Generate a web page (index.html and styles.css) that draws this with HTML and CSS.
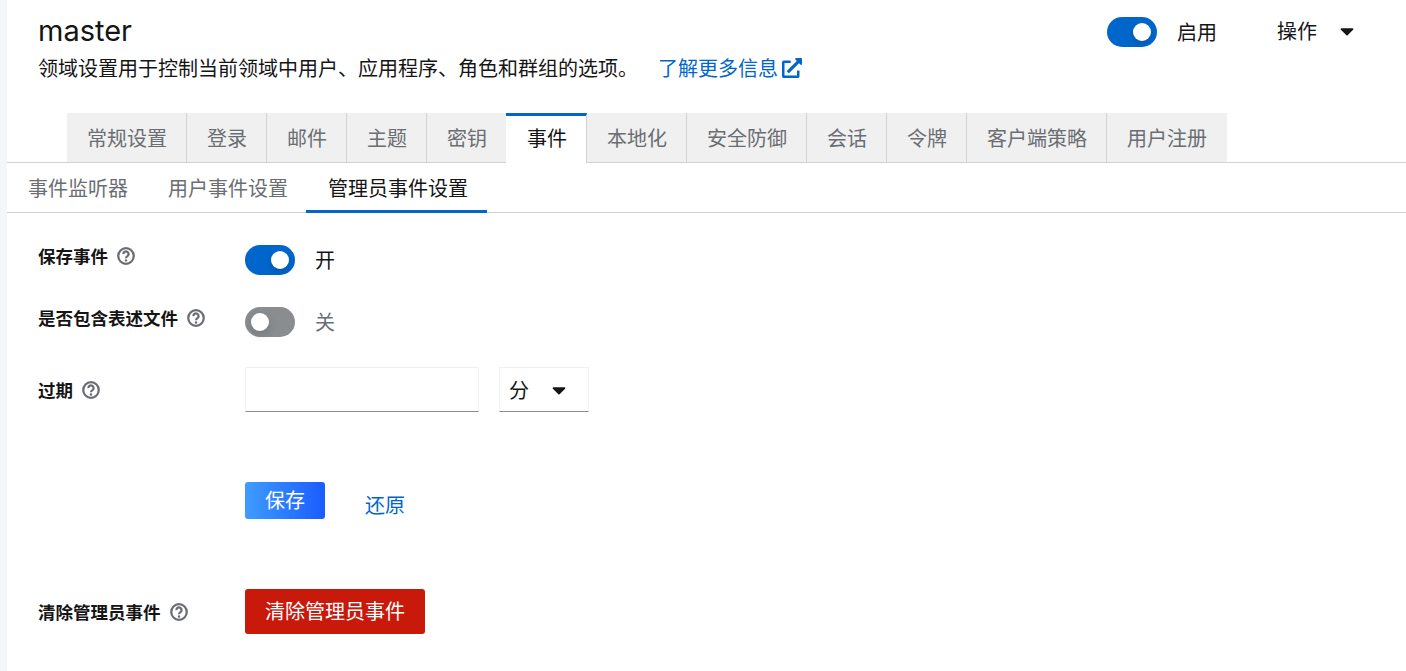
FILE: index.html
```html
<!DOCTYPE html>
<html lang="zh-CN">
<head>
<meta charset="utf-8">
<title>master</title>
<link rel="stylesheet" href="styles.css">
</head>
<body>
<main class="page">
  <header class="head">
    <div class="head-text">
      <h1 class="title">master</h1>
      <p class="desc"><span>领域设置用于控制当前领域中用户、应用程序、角色和群组的选项。</span>
        <a class="more" href="#">了解更多信息<svg class="ext" viewBox="0 0 512 512"><path d="M432,320H400a16,16,0,0,0-16,16V448H64V128H208a16,16,0,0,0,16-16V80a16,16,0,0,0-16-16H48A48,48,0,0,0,0,112V464a48,48,0,0,0,48,48H400a48,48,0,0,0,48-48V336A16,16,0,0,0,432,320ZM488,0h-128c-21.37,0-32.05,25.91-17,41l35.73,35.73L135,320.37a24,24,0,0,0,0,34L157.67,377a24,24,0,0,0,34,0L435.28,133.32,471,169c15,15,41,4.5,41-17V24A24,24,0,0,0,488,0Z"/></svg></a>
      </p>
    </div>
    <div class="head-actions">
      <span class="toggle on"><i class="knob"></i></span>
      <span class="toggle-label">启用</span>
      <span class="actions">操作<svg class="caret" viewBox="0 0 320 512"><path d="M31.3 192h257.3c17.8 0 26.7 21.5 14.1 34.1L174.1 354.8c-7.8 7.8-20.5 7.8-28.3 0L17.2 226.1C4.6 213.5 13.5 192 31.3 192z"/></svg></span>
    </div>
  </header>

  <nav class="tabs">
    <a class="tab">常规设置</a>
    <a class="tab">登录</a>
    <a class="tab">邮件</a>
    <a class="tab">主题</a>
    <a class="tab">密钥</a>
    <a class="tab active">事件</a>
    <a class="tab">本地化</a>
    <a class="tab">安全防御</a>
    <a class="tab">会话</a>
    <a class="tab">令牌</a>
    <a class="tab">客户端策略</a>
    <a class="tab">用户注册</a>
  </nav>

  <nav class="subtabs">
    <a class="subtab">事件监听器</a>
    <a class="subtab">用户事件设置</a>
    <a class="subtab active">管理员事件设置</a>
  </nav>

  <section class="form">
    <div class="row row-save">
      <label class="label">保存事件<svg class="help" viewBox="0 0 16 16"><circle cx="8" cy="8" r="6.9"/><path d="M5.7 6.3a2.3 2.3 0 1 1 3.6 1.8c-.9.6-1.3 1-1.3 1.8"/><circle class="dot" cx="8" cy="11.9" r="1.1"/></svg></label>
      <span class="toggle on"><i class="knob"></i></span>
      <span class="toggle-label">开</span>
    </div>
    <div class="row row-profile">
      <label class="label">是否包含表述文件<svg class="help" viewBox="0 0 16 16"><circle cx="8" cy="8" r="6.9"/><path d="M5.7 6.3a2.3 2.3 0 1 1 3.6 1.8c-.9.6-1.3 1-1.3 1.8"/><circle class="dot" cx="8" cy="11.9" r="1.1"/></svg></label>
      <span class="toggle"><i class="knob"></i></span>
      <span class="toggle-label muted">关</span>
    </div>
    <div class="row row-expire">
      <label class="label">过期<svg class="help" viewBox="0 0 16 16"><circle cx="8" cy="8" r="6.9"/><path d="M5.7 6.3a2.3 2.3 0 1 1 3.6 1.8c-.9.6-1.3 1-1.3 1.8"/><circle class="dot" cx="8" cy="11.9" r="1.1"/></svg></label>
      <input class="input" type="text">
      <span class="select">分<svg class="caret" viewBox="0 0 320 512"><path d="M31.3 192h257.3c17.8 0 26.7 21.5 14.1 34.1L174.1 354.8c-7.8 7.8-20.5 7.8-28.3 0L17.2 226.1C4.6 213.5 13.5 192 31.3 192z"/></svg></span>
    </div>
    <div class="row row-buttons">
      <span class="label"></span>
      <button class="btn primary" type="button">保存</button>
      <a class="link" href="#">还原</a>
    </div>
    <div class="row row-clear">
      <label class="label">清除管理员事件<svg class="help" viewBox="0 0 16 16"><circle cx="8" cy="8" r="6.9"/><path d="M5.7 6.3a2.3 2.3 0 1 1 3.6 1.8c-.9.6-1.3 1-1.3 1.8"/><circle class="dot" cx="8" cy="11.9" r="1.1"/></svg></label>
      <button class="btn danger" type="button">清除管理员事件</button>
    </div>
  </section>
</main>
</body>
</html>
```
FILE: styles.css
```css
* { box-sizing: border-box; }
html, body { margin: 0; padding: 0; height: 100%; }
body {
  background: #f5f6f8;
  color: #151515;
  font-family: "Noto Sans CJK SC", "Liberation Sans", sans-serif;
  font-size: 20px;
  overflow: hidden;
}
.page {
  margin-left: 7px;
  height: 671px;
  background: #fff;
}
.head {
  display: flex;
  justify-content: space-between;
  height: 113px;
  padding: 14px 52px 0 31px;
}
.title {
  margin: 0;
  font-family: "Inter", "Noto Sans", sans-serif;
  font-size: 29px;
  line-height: 34px;
  font-weight: 400;
}
.desc {
  margin: 3px 0 0;
  display: flex;
  align-items: center;
  gap: 20px;
  font-size: 20px;
  line-height: 34px;
  color: #151515;
}
.more { display: flex; align-items: center; color: #06c; text-decoration: none; }
.ext { width: 20px; height: 20px; margin-left: 4px; fill: #06c; }
.head-actions { display: flex; align-items: center; height: 36px; }
.toggle {
  position: relative;
  display: inline-block;
  flex: none;
  width: 50px;
  height: 30px;
  border-radius: 15px;
  background: #8a8d90;
}
.toggle.on { background: #06c; }
.knob {
  position: absolute;
  top: 6px;
  left: 6px;
  width: 18px;
  height: 18px;
  border-radius: 50%;
  background: #fff;
  box-shadow: 0 4px 8px rgba(3, 3, 3, .16);
}
.toggle.on .knob { left: 26px; }
.toggle-label { margin-left: 20px; font-size: 20px; line-height: 30px; color: #151515; }
.toggle-label.muted { color: #6a6e73; }
.actions {
  display: flex;
  align-items: center;
  margin-left: 60px;
  padding-bottom: 3px;
  font-size: 20px;
}
.actions .caret { margin-left: 23px; }
.caret { width: 14px; height: 22px; fill: #151515; flex: none; }
.tabs {
  display: flex;
  height: 50px;
  padding-left: 60px;
  border-bottom: 1px solid #d2d2d2;
}
.tab {
  height: 49px;
  padding: 0 19px 0 20px;
  line-height: 49px;
  background: #f0f0f0;
  color: #6a6e73;
  border-right: 1px solid #d2d2d2;
  white-space: nowrap;
}
.tab:last-child { border-right: 0; padding-right: 20px; }
.tab.active {
  height: 50px;
  margin-left: -1px;
  padding-left: 21px;
  background: #fff;
  color: #151515;
  border-top: 3px solid #06c;
  line-height: 43px;
  margin-bottom: -1px;
}
.subtabs {
  display: flex;
  height: 50px;
  border-bottom: 1px solid #d2d2d2;
}
.subtab {
  padding: 0 20px 0 21px;
  line-height: 50px;
  color: #6a6e73;
  white-space: nowrap;
}
.subtab:nth-child(2) { padding: 0 18px 0 20px; }
.subtab.active {
  height: 50px;
  padding: 0 19px 0 22px;
  color: #151515;
  border-bottom: 3px solid #06c;
}
.form { padding-left: 31px; }
.row { display: flex; align-items: flex-start; }
.label {
  display: flex;
  align-items: center;
  flex: none;
  width: 207px;
  font-size: 17.5px;
  font-weight: 700;
  line-height: 24px;
  color: #151515;
}
.help {
  width: 18px;
  height: 18px;
  margin-left: 9px;
  fill: none;
  stroke: #6a6e73;
  stroke-width: 2;
}
.help .dot { fill: #6a6e73; stroke: none; }
.row-save { padding-top: 32px; height: 94px; }
.row-save .label, .row-profile .label { margin-top: -1px; }
.row-profile { height: 60px; }
.row-expire { height: 115px; }
.row-expire .label { margin-top: 11px; }
.input {
  width: 234px;
  height: 45px;
  padding: 0 8px;
  border: 1px solid #f0f0f0;
  border-bottom: 1px solid #8a8d90;
  background: #fff;
  outline: 0;
}
.select {
  display: flex;
  align-items: center;
  gap: 23px;
  width: 90px;
  height: 45px;
  margin-left: 20px;
  padding-left: 9px;
  border: 1px solid #f0f0f0;
  border-bottom: 1px solid #8a8d90;
  color: #151515;
}
.row-buttons { height: 107px; }
.btn {
  border: 0;
  border-radius: 3px;
  color: #fff;
  font-family: inherit;
  font-size: 20px;
  padding: 0 20px;
}
.primary {
  height: 37px;
  padding-bottom: 2px;
  background: linear-gradient(90deg, #3f9cff, #1a5cff);
}
.danger { height: 45px; padding-bottom: 2px; background: #c9190b; }
.link {
  margin: 4px 0 0 40px;
  line-height: 37px;
  color: #06c;
  text-decoration: none;
}
.row-clear .label { margin-top: 11px; }
```
